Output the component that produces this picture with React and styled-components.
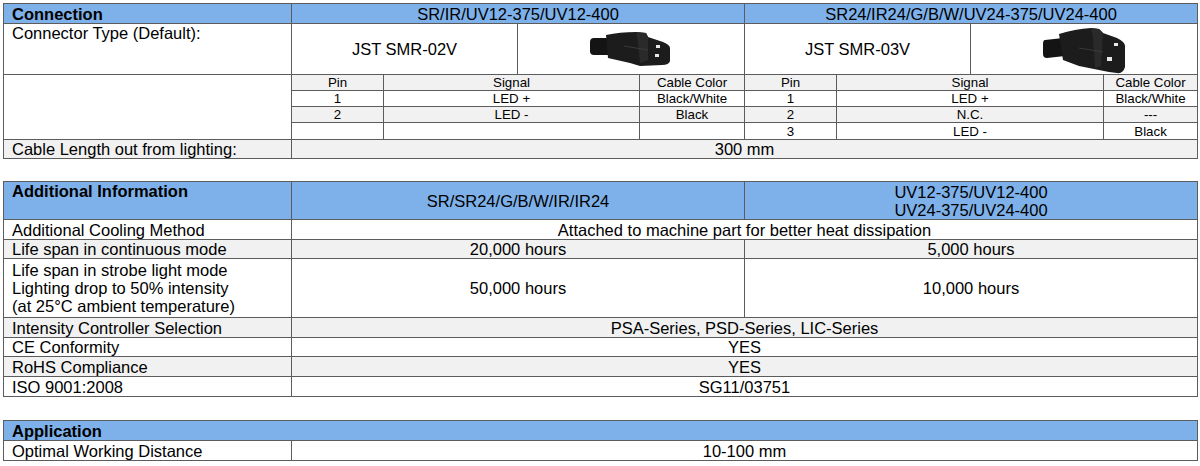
import React from "react";
import styled, { createGlobalStyle } from "styled-components";

const Global = createGlobalStyle`
  html, body { margin: 0; padding: 0; background: #fff; }
  body { font-family: "Liberation Sans", Arial, sans-serif; color: #000; }
`;

const Page = styled.div`
  padding: 3px 3px 0 3px;
  display: flex;
  flex-direction: column;
`;

const Table = styled.table`
  width: 1194px;
  border-collapse: collapse;
  table-layout: fixed;
  border: 1px solid #5c5c5c;
  margin-top: ${(p) => p.$mt || 0}px;
  font-size: 16.5px;
  line-height: 18px;
`;

const Row = styled.tr`
  height: ${(p) => p.$h}px;
  background: ${(p) =>
    p.$tone === "head" ? "#7eb1e9" : p.$tone === "grey" ? "#f1f1f1" : "#fff"};
`;

const Label = styled.td`
  border: 1px solid #5c5c5c;
  padding: 0 8px;
  vertical-align: ${(p) => (p.$top ? "top" : "middle")};
  text-align: left;
  font-weight: ${(p) => (p.$bold ? 700 : 400)};
  white-space: nowrap;
  background: ${(p) => p.$bg || "inherit"};
`;

const Value = styled.td`
  border: 1px solid #5c5c5c;
  padding: 0;
  text-align: center;
  vertical-align: middle;
  white-space: nowrap;
  font-size: ${(p) => (p.$small ? "13.3px" : "16.5px")};
  line-height: ${(p) => (p.$small ? "15px" : "18px")};
  background: ${(p) => p.$bg || "inherit"};
`;

const Lines = styled.div`
  display: flex;
  flex-direction: column;
  align-items: ${(p) => (p.$left ? "flex-start" : "center")};
`;

const Pic = styled.div`
  display: flex;
  align-items: center;
  justify-content: center;
`;

const Connector2 = () => (
  <svg width="82" height="38" viewBox="0 0 82 38">
    <path d="M4 8 L22 8 L22 25 L4 25 Q0 25 0 21 L0 12 Q0 8 4 8 Z" fill="#141414" />
    <path
      d="M16 5 Q30 2 46 2 L56 3 L58 7 L73 12 Q80 15 80 18 L80 31 Q79 35 72 35 L50 36 L40 33 L18 28 Z"
      fill="#1c1c1c"
    />
    <path d="M46 2 L56 3 L58 7 L58 30 L50 33 L48 12 Z" fill="#2a2a2a" />
    <path d="M34 16 L58 20" stroke="#3a3a3a" strokeWidth="1" />
    <rect x="66" y="15" width="4" height="3" fill="#e8e8e8" />
    <rect x="65" y="24" width="4" height="3" fill="#e8e8e8" />
  </svg>
);

const Connector3 = () => (
  <svg width="90" height="50" viewBox="0 0 90 50">
    <path d="M6 16 L24 14 L26 32 L8 34 Q4 34 4 30 L4 20 Q4 16 6 16 Z" fill="#141414" />
    <path
      d="M20 10 Q36 5 52 4 L60 5 L64 9 L78 14 Q86 18 86 22 L86 43 Q84 50 78 49 L70 48 L40 42 L24 36 Z"
      fill="#1c1c1c"
    />
    <path d="M52 4 L60 5 L64 9 L62 42 L56 44 L54 14 Z" fill="#2a2a2a" />
    <path d="M40 24 L64 28" stroke="#3a3a3a" strokeWidth="1" />
    <rect x="75" y="19" width="4" height="3" fill="#e8e8e8" />
    <rect x="68" y="33" width="5" height="4" fill="#e8e8e8" />
  </svg>
);

const W1 = [288, 92, 134, 122, 105, 92, 134, 133, 94];

export default function App() {
  return (
    <>
      <Global />
      <Page>
        <Table>
          <colgroup>
            {W1.map((w, i) => (
              <col key={i} style={{ width: w }} />
            ))}
          </colgroup>
          <tbody>
            <Row $h={20} $tone="head">
              <Label $bold>Connection</Label>
              <Value colSpan={4}>SR/IR/UV12-375/UV12-400</Value>
              <Value colSpan={4}>SR24/IR24/G/B/W/UV24-375/UV24-400</Value>
            </Row>
            <Row $h={51}>
              <Label $top>Connector Type (Default):</Label>
              <Value colSpan={2}>JST SMR-02V</Value>
              <Value colSpan={2}>
                <Pic>
                  <Connector2 />
                </Pic>
              </Value>
              <Value colSpan={2}>JST SMR-03V</Value>
              <Value colSpan={2}>
                <Pic>
                  <Connector3 />
                </Pic>
              </Value>
            </Row>
            <Row $h={16} $tone="grey">
              <Label rowSpan={4} $bg="#fff"></Label>
              <Value $small>Pin</Value>
              <Value $small colSpan={2}>Signal</Value>
              <Value $small>Cable Color</Value>
              <Value $small>Pin</Value>
              <Value $small colSpan={2}>Signal</Value>
              <Value $small>Cable Color</Value>
            </Row>
            <Row $h={16}>
              <Value $small>1</Value>
              <Value $small colSpan={2}>LED +</Value>
              <Value $small>Black/White</Value>
              <Value $small>1</Value>
              <Value $small colSpan={2}>LED +</Value>
              <Value $small>Black/White</Value>
            </Row>
            <Row $h={16} $tone="grey">
              <Value $small>2</Value>
              <Value $small colSpan={2}>LED -</Value>
              <Value $small>Black</Value>
              <Value $small>2</Value>
              <Value $small colSpan={2}>N.C.</Value>
              <Value $small>---</Value>
            </Row>
            <Row $h={17}>
              <Value $small></Value>
              <Value $small colSpan={2}></Value>
              <Value $small></Value>
              <Value $small>3</Value>
              <Value $small colSpan={2}>LED -</Value>
              <Value $small>Black</Value>
            </Row>
            <Row $h={19} $tone="grey">
              <Label>Cable Length out from lighting:</Label>
              <Value colSpan={8}>300 mm</Value>
            </Row>
          </tbody>
        </Table>

        <Table $mt={22}>
          <colgroup>
            <col style={{ width: 288 }} />
            <col style={{ width: 453 }} />
            <col style={{ width: 453 }} />
          </colgroup>
          <tbody>
            <Row $h={38} $tone="head">
              <Label $bold $top>
                Additional Information
              </Label>
              <Value>SR/SR24/G/B/W/IR/IR24</Value>
              <Value>
                <Lines>
                  <span>UV12-375/UV12-400</span>
                  <span>UV24-375/UV24-400</span>
                </Lines>
              </Value>
            </Row>
            <Row $h={20}>
              <Label>Additional Cooling Method</Label>
              <Value colSpan={2}>Attached to machine part for better heat dissipation</Value>
            </Row>
            <Row $h={19} $tone="grey">
              <Label>Life span in continuous mode</Label>
              <Value>20,000 hours</Value>
              <Value>5,000 hours</Value>
            </Row>
            <Row $h={59}>
              <Label>
                <Lines $left>
                  <span>Life span in strobe light mode</span>
                  <span>Lighting drop to 50% intensity</span>
                  <span>(at 25°C ambient temperature)</span>
                </Lines>
              </Label>
              <Value>50,000 hours</Value>
              <Value>10,000 hours</Value>
            </Row>
            <Row $h={20} $tone="grey">
              <Label>Intensity Controller Selection</Label>
              <Value colSpan={2}>PSA-Series, PSD-Series, LIC-Series</Value>
            </Row>
            <Row $h={19}>
              <Label>CE Conformity</Label>
              <Value colSpan={2}>YES</Value>
            </Row>
            <Row $h={20} $tone="grey">
              <Label>RoHS Compliance</Label>
              <Value colSpan={2}>YES</Value>
            </Row>
            <Row $h={20}>
              <Label>ISO 9001:2008</Label>
              <Value colSpan={2}>SG11/03751</Value>
            </Row>
          </tbody>
        </Table>

        <Table $mt={23}>
          <colgroup>
            <col style={{ width: 288 }} />
            <col style={{ width: 906 }} />
          </colgroup>
          <tbody>
            <Row $h={20} $tone="head">
              <Label $bold colSpan={2}>
                Application
              </Label>
            </Row>
            <Row $h={20}>
              <Label>Optimal Working Distance</Label>
              <Value>10-100 mm</Value>
            </Row>
          </tbody>
        </Table>
      </Page>
    </>
  );
}
